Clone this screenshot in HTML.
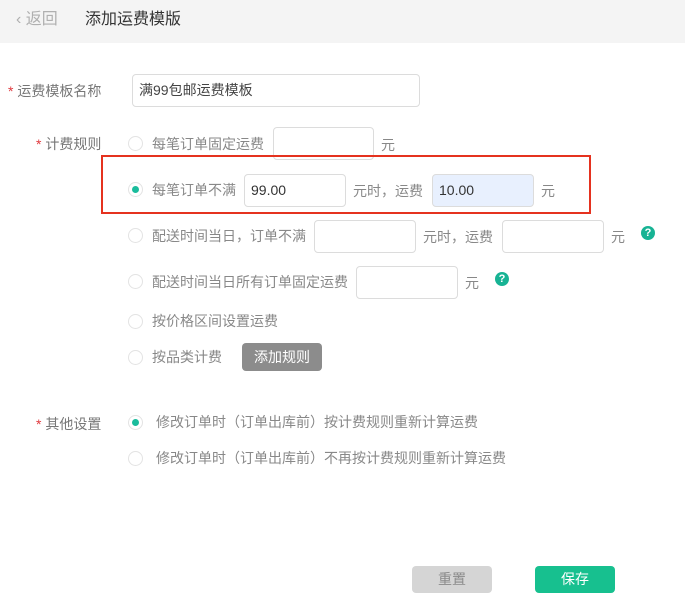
<!DOCTYPE html>
<html><head><meta charset="utf-8"><style>
*{margin:0;padding:0;box-sizing:border-box}
body{width:685px;height:605px;background:#fff;position:relative;overflow:hidden;font-family:"Liberation Sans","Noto Sans CJK SC",sans-serif;font-size:14px;color:#888}
.a{position:absolute;white-space:nowrap;line-height:16px}
.hd{position:absolute;left:0;top:0;width:685px;height:43px;background:#f4f4f4}
.in{position:absolute;height:33px;border:1px solid #dcdcdc;border-radius:4px;background:#fff;font-size:14px;color:#333;padding-left:6px;line-height:31px}
.r{position:absolute;width:15px;height:15px;border:1px solid #e3e3e3;border-radius:50%;background:#fff}
.r.on::after{content:"";position:absolute;left:3px;top:3px;width:7px;height:7px;border-radius:50%;background:#1abc9c}
.st{color:#e0393e}
.q{position:absolute;width:14px;height:14px;border-radius:50%;background:#17b394;color:#fff;font-size:11px;font-weight:bold;text-align:center;line-height:14px}
.btn{position:absolute;border-radius:4px;text-align:center;color:#fff;font-size:14px}
</style></head><body>
<div class="hd"></div>
<div class="a" style="left:16px;top:11px;font-size:16px;color:#b0b0b0;line-height:18px">‹ 返回</div>
<div class="a" style="left:85px;top:10px;font-size:16px;color:#333;line-height:20px">添加运费模版</div>

<div class="a" style="left:8px;top:83px;color:#777"><span class="st">*</span> 运费模板名称</div>
<div class="in" style="left:132px;top:74px;width:288px;height:33px;color:#444">满99包邮运费模板</div>

<div class="a" style="left:36px;top:136px;color:#777"><span class="st">*</span> 计费规则</div>
<div class="r" style="left:128px;top:136px"></div>
<div class="a" style="left:152px;top:136px">每笔订单固定运费</div>
<div class="in" style="left:273px;top:127px;width:101px"></div>
<div class="a" style="left:381px;top:137px">元</div>

<div style="position:absolute;left:101px;top:155px;width:490px;height:59px;border:2px solid #e5321f"></div>
<div class="r on" style="left:128px;top:182px"></div>
<div class="a" style="left:152px;top:182px">每笔订单不满</div>
<div class="in" style="left:244px;top:174px;width:102px">99.00</div>
<div class="a" style="left:353px;top:183px">元时，运费</div>
<div class="in" style="left:432px;top:174px;width:102px;background:#e8f0fe">10.00</div>
<div class="a" style="left:541px;top:183px">元</div>

<div class="r" style="left:128px;top:228px"></div>
<div class="a" style="left:152px;top:228px">配送时间当日，订单不满</div>
<div class="in" style="left:314px;top:220px;width:102px"></div>
<div class="a" style="left:423px;top:229px">元时，运费</div>
<div class="in" style="left:502px;top:220px;width:102px"></div>
<div class="a" style="left:611px;top:229px">元</div>
<div class="q" style="left:641px;top:226px">?</div>

<div class="r" style="left:128px;top:274px"></div>
<div class="a" style="left:152px;top:274px">配送时间当日所有订单固定运费</div>
<div class="in" style="left:356px;top:266px;width:102px"></div>
<div class="a" style="left:465px;top:275px">元</div>
<div class="q" style="left:495px;top:272px">?</div>

<div class="r" style="left:128px;top:314px"></div>
<div class="a" style="left:152px;top:313px">按价格区间设置运费</div>

<div class="r" style="left:128px;top:350px"></div>
<div class="a" style="left:152px;top:349px">按品类计费</div>
<div class="btn" style="left:242px;top:343px;width:80px;height:28px;line-height:28px;background:#8c8c8c">添加规则</div>

<div class="a" style="left:36px;top:416px;color:#777"><span class="st">*</span> 其他设置</div>
<div class="r on" style="left:128px;top:415px"></div>
<div class="a" style="left:156px;top:414px">修改订单时（订单出库前）按计费规则重新计算运费</div>
<div class="r" style="left:128px;top:451px"></div>
<div class="a" style="left:156px;top:450px">修改订单时（订单出库前）不再按计费规则重新计算运费</div>

<div class="btn" style="left:412px;top:566px;width:80px;height:27px;line-height:27px;background:#d5d5d5;color:#8a8a8a">重置</div>
<div class="btn" style="left:535px;top:566px;width:80px;height:27px;line-height:27px;background:#17c08f">保存</div>
</body></html>
